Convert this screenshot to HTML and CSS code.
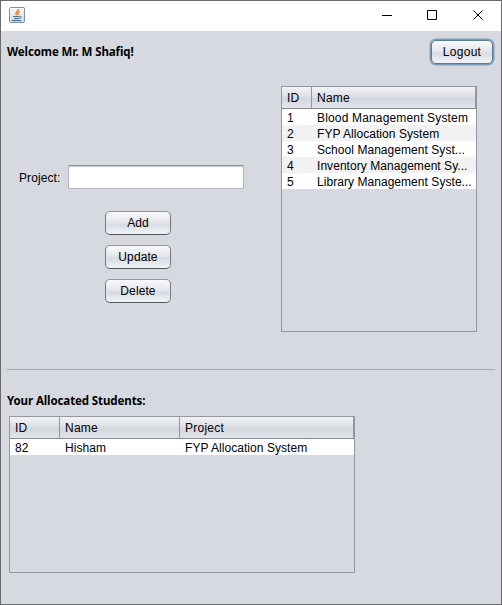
FILE: index.html
```html
<!DOCTYPE html>
<html lang="en">
<head>
<meta charset="utf-8">
<title>Projects</title>
<link rel="stylesheet" href="styles.css">
</head>
<body>
<div class="window">
  <header class="titlebar">
    <svg class="java" width="16" height="16" viewBox="0 0 16 16" fill="none">
      <defs><linearGradient id="tile" x1="0" y1="0" x2="0" y2="1"><stop stop-color="#fafcfd"/><stop offset="1" stop-color="#cbd9e3"/></linearGradient></defs>
      <rect x=".5" y=".5" width="15" height="15" rx="1" fill="url(#tile)" stroke="#7893a7"/>
      <path d="M9.500 2C9.700 4 5.400 4.800 7.500 8M10.800 4.300C7.700 5.500 9.900 6.400 8.600 8.200" stroke="#e27d35" stroke-width="1.400"/>
      <path d="M4 9.500h6.500M5 11.500h5M3 13.500h9M10.500 9.500c2.600-.4 2.200 1.700 0 2" stroke="#486f8d" stroke-width="1"/>
    </svg>
    <svg class="controls" width="102" height="12" viewBox="0 0 102 12" fill="none" stroke="#000">
      <path d="M0 5.500h10M45.500.5h9v9h-9zM91.500.5l9 9M100.500.5l-9 9"/>
    </svg>
  </header>
  <main class="content">
    <div class="topline">
      <h1 class="heading welcome">Welcome Mr. M Shafiq!</h1>
      <button class="button logout">Logout</button>
    </div>
    <section class="projects">
      <form class="editor">
        <label class="field"><span class="label">Project:</span><input class="input" type="text"></label>
        <div class="actions">
          <button class="button" type="button">Add</button>
          <button class="button" type="button">Update</button>
          <button class="button" type="button">Delete</button>
        </div>
      </form>
      <div class="table project-table">
        <div class="row head"><span>ID</span><span>Name</span></div>
        <div class="row"><span>1</span><span class="wide">Blood Management System</span></div>
        <div class="row"><span>2</span><span>FYP Allocation System</span></div>
        <div class="row"><span>3</span><span>School Management Syst...</span></div>
        <div class="row"><span>4</span><span>Inventory Management Sy...</span></div>
        <div class="row"><span>5</span><span>Library Management Syste...</span></div>
      </div>
    </section>
    <hr class="divider">
    <h2 class="heading students">Your Allocated Students:</h2>
    <div class="table student-table">
      <div class="row head"><span>ID</span><span>Name</span><span>Project</span></div>
      <div class="row"><span>82</span><span>Hisham</span><span>FYP Allocation System</span></div>
    </div>
  </main>
</div>
</body>
</html>
```
FILE: styles.css
```css
* { box-sizing: border-box; }
body {
  margin: 0;
  font: 12px/16px "Liberation Sans", Arial, sans-serif;
  color: #000;
}
.window {
  display: flex;
  flex-direction: column;
  height: 605px;
  border: 1px solid #6b6b6d;
  background: #d6d9e0;
}
.titlebar {
  display: flex;
  justify-content: space-between;
  height: 30px;
  padding: 6px 17px 0 8px;
  background: #fff;
}
.controls { margin-top: 3px; }
.content { padding: 7px 6px 0; }
.topline {
  display: flex;
  justify-content: space-between;
  padding-right: 1px;
}
.heading {
  margin: 0;
  font: bold 11.5px/16px "Noto Sans", "Open Sans", sans-serif;
  letter-spacing: -0.1px;
  white-space: nowrap;
}
.welcome { margin-top: 6px; }
.button {
  display: block;
  width: 66px;
  height: 24px;
  padding: 0;
  border: 1px solid #757980;
  border-top-color: #93969c;
  border-bottom-color: #53575f;
  border-radius: 5px;
  background: linear-gradient(#fafafc, #e3e5eb 48%, #d7dae1 54%, #f2f4f8);
  color: #000;
  font: inherit;
  letter-spacing: 0.1px;
}
.logout {
  width: 62px;
  margin: 2px 1px 0 0;
  border-color: #5d7a95;
  box-shadow: 0 0 0 1.500px #7d9ebb;
  letter-spacing: 0.3px;
}
.projects {
  display: flex;
  height: 246px;
  margin-top: 22px;
}
.editor { width: 274px; padding: 79px 0 0 12px; }
.field { display: flex; align-items: center; }
.label { width: 49px; padding-top: 1px; letter-spacing: 0.1px; }
.input {
  width: 176px;
  height: 24px;
  border: 1px solid #b4b6bc;
  border-top-color: #8c8e94;
  background: #fff;
  box-shadow: inset 0 1px 1px #c6c7ca;
}
.actions {
  display: flex;
  flex-direction: column;
  gap: 10px;
  margin: 22px 0 0 86px;
}
.table { border: 1px solid #9297a1; }
.project-table { width: 196px; }
.row {
  display: grid;
  grid-template-columns: 30px 1fr;
  height: 16px;
  background: #fff;
  white-space: nowrap;
  letter-spacing: 0.05px;
}
.row:nth-child(odd):not(.head) { background: #f2f2f2; }
.row span { padding-left: 5px; padding-top: 1px; }
.row .wide { letter-spacing: 0.16px; }
.head {
  height: 22px;
  border-bottom: 1px solid #858993;
  background: linear-gradient(#f2f3f6, #dcdfe5 46%, #d3d6dd 54%, #e2e5eb);
  letter-spacing: 0.25px;
}
.head span { padding-top: 3px; border-right: 1px solid #9297a1; }
.divider {
  height: 1px;
  margin: 37px 0 23px;
  border: 0;
  background: #a5a9b3;
}
.student-table {
  width: 346px;
  height: 157px;
  margin: 7px 0 0 2px;
}
.student-table .row { grid-template-columns: 50px 120px 1fr; }
```
